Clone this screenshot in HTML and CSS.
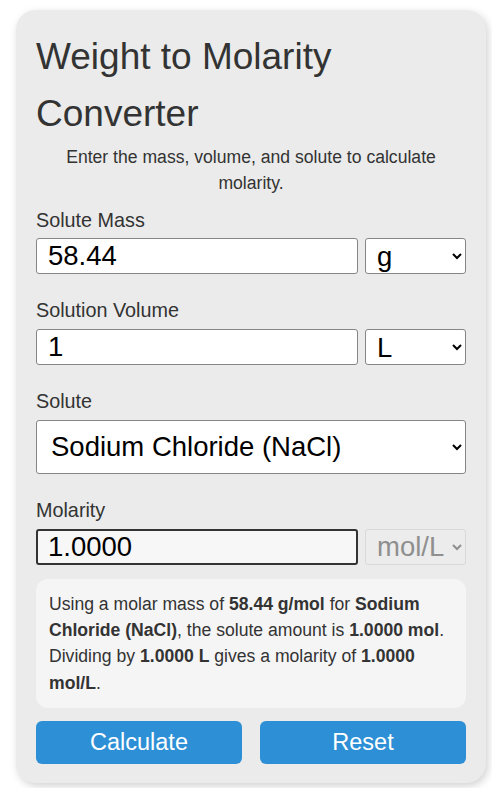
FILE: index.html
```html
<!DOCTYPE html>
<html>
<head>
  <meta charset="UTF-8">
  <title>Weight to Molarity Converter</title>
  <link rel="stylesheet" href="styles.css">
</head>
<body>
  <div class="card">
    <h1>Weight to Molarity Converter</h1>
    <p class="intro">Enter the mass, volume, and solute to calculate molarity.</p>

    <div class="group">
      <label for="mass">Solute Mass</label>
      <div class="row">
        <input id="mass" type="text" value="58.44">
        <select id="massUnit"><option>g</option><option>mg</option><option>kg</option></select>
      </div>
    </div>

    <div class="group">
      <label for="volume">Solution Volume</label>
      <div class="row">
        <input id="volume" type="text" value="1">
        <select id="volumeUnit"><option>L</option><option>mL</option></select>
      </div>
    </div>

    <div class="group">
      <label for="solute">Solute</label>
      <select id="solute" class="big">
        <option>Sodium Chloride (NaCl)</option>
        <option>Potassium Chloride (KCl)</option>
        <option>Glucose (C6H12O6)</option>
      </select>
    </div>

    <div class="group">
      <label for="molarity">Molarity</label>
      <div class="row">
        <input id="molarity" class="result" type="text" value="1.0000" readonly>
        <select disabled><option>mol/L</option></select>
      </div>
    </div>

    <div class="explain">
      Using a molar mass of <b>58.44 g/mol</b> for <b>Sodium</b> <b>Chloride (NaCl)</b>, the solute amount is <b>1.0000 mol</b>.
      <span>Dividing by <b>1.0000 L</b> gives a molarity of <b>1.0000</b> <b>mol/L</b>.</span>
    </div>

    <div class="buttons">
      <button>Calculate</button>
      <button>Reset</button>
    </div>
  </div>
</body>
</html>
```

FILE: styles.css
```css
body { margin: 0; background: #fff; font-family: "Liberation Sans", Arial, sans-serif; font-size: 17.6px; line-height: 1.5; color: #333; }
.card { margin: 10px 6px 5px 16px; padding: 18px 20px 19px; background: #eaebea; border-radius: 20px; box-shadow: 2px 3px 8px rgba(0,0,0,.18); }
h1 { margin: 0 0 2px; font-size: 37px; font-weight: normal; line-height: 57px; color: #333; }
.intro { margin: 0 0 9px; text-align: center; }
.group { margin-bottom: 22px; }
label { display: block; font-size: 19.8px; margin-bottom: 3px; }
.row { display: flex; gap: 7px; }
input, select { box-sizing: border-box; height: 36px; font-family: inherit; font-size: 27.5px; color: #000; background: #fff; border: 1px solid #858585; border-radius: 3px; }
input { flex: 1; min-width: 0; padding: 0 11px; }
.row select { width: 101px; padding: 0 0 0 7px; }
select.big { width: 100%; height: 54px; padding: 0 10px; }
input.result { background: #f7f7f7; border: 2px solid #333; padding: 0 10px; }
select:disabled { color: #8f8f8f; background: #ececec; border-color: #d9d9d9; opacity: 1; }
.explain { margin: -8px 0 13px; padding: 12px 13px; background: #f5f5f5; border-radius: 12px; }
.buttons { display: flex; gap: 18px; }
button { flex: 1; height: 43px; font-family: inherit; font-size: 23.5px; color: #fff; background: #2d8fd5; border: none; border-radius: 6px; }
```
